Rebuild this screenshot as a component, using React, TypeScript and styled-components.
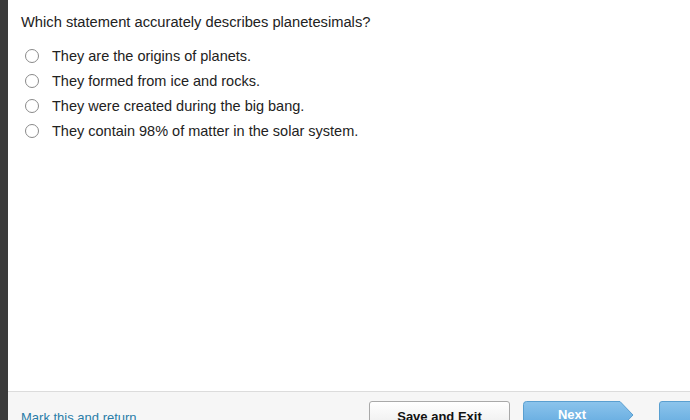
import React from "react";
import styled, { createGlobalStyle } from "styled-components";

const Global = createGlobalStyle`
  html, body { margin: 0; padding: 0; background: #fff; }
  body { font-family: "Liberation Sans", Arial, sans-serif; overflow: hidden; }
`;

const Page = styled.div`
  display: flex;
  width: 690px;
  height: 420px;
  overflow: hidden;
`;

const Strip = styled.div`
  width: 8px;
  flex: none;
  background: #3b3b3b;
`;

const Main = styled.div`
  flex: 1;
  display: flex;
  flex-direction: column;
  min-width: 0;
`;

const Content = styled.div`
  height: 391px;
  flex: none;
  padding: 13px 0 0 13px;
  box-sizing: border-box;
  background: #fff;
`;

const Question = styled.div`
  font-size: 14.7px;
  color: #222;
  line-height: 18px;
  margin-bottom: 12px;
`;

const Options = styled.div`
  display: flex;
  flex-direction: column;
`;

const Option = styled.label`
  display: flex;
  align-items: center;
  height: 25px;
  font-size: 14.5px;
  color: #222;
`;

const Radio = styled.span`
  width: 12px;
  height: 12px;
  border: 1.7px solid #8a8a8a;
  border-radius: 50%;
  margin: 0 13px 0 4px;
  flex: none;
`;

const Footer = styled.div`
  flex: 1;
  border-top: 1.5px solid #dcdcdc;
  background: #f6f6f6;
  display: flex;
  align-items: flex-start;
  padding: 9px 0 0 13px;
`;

const Link = styled.a`
  font-size: 13px;
  color: #2a7da8;
  margin-top: 9px;
  width: 348px;
  flex: none;
`;

const SaveButton = styled.button`
  width: 141px;
  height: 28px;
  flex: none;
  border: 1px solid #a9a9a9;
  border-radius: 3px;
  background: linear-gradient(#ffffff, #ececec);
  font-family: "Liberation Sans", Arial, sans-serif;
  font-weight: bold;
  font-size: 13px;
  color: #111;
  padding: 0;
  padding-top: 2px;
`;

const NextWrap = styled.div`
  position: relative;
  width: 111px;
  height: 28px;
  margin-left: 13px;
  flex: none;
`;

const NextSvg = styled.svg`
  position: absolute;
  inset: 0;
`;

const NextLabel = styled.span`
  position: relative;
  display: block;
  width: 98px;
  text-align: center;
  line-height: 28px;
  font-weight: bold;
  font-size: 13px;
  color: #fff;
`;

const Third = styled.div`
  width: 40px;
  height: 28px;
  margin-left: 25px;
  flex: none;
  border: 1px solid #5a9fd0;
  border-radius: 3px;
  background: linear-gradient(#8cc4ec, #5fa8de);
`;

const options = [
  "They are the origins of planets.",
  "They formed from ice and rocks.",
  "They were created during the big bang.",
  "They contain 98% of matter in the solar system.",
];

export default function App() {
  return (
    <Page>
      <Global />
      <Strip />
      <Main>
        <Content>
          <Question>Which statement accurately describes planetesimals?</Question>
          <Options>
            {options.map((o) => (
              <Option key={o}>
                <Radio />
                {o}
              </Option>
            ))}
          </Options>
        </Content>
        <Footer>
          <Link>Mark this and return</Link>
          <SaveButton>Save and Exit</SaveButton>
          <NextWrap>
            <NextSvg width="111" height="28" viewBox="0 0 111 28">
              <defs>
                <linearGradient id="ng" x1="0" y1="0" x2="0" y2="1">
                  <stop offset="0" stopColor="#8cc4ec" />
                  <stop offset="1" stopColor="#5fa8de" />
                </linearGradient>
              </defs>
              <path
                d="M3.5 0.5 H97 L110 14 L97 27.5 H3.5 Q0.5 27.5 0.5 24.5 V3.5 Q0.5 0.5 3.5 0.5 Z"
                fill="url(#ng)"
                stroke="#5a9fd0"
              />
            </NextSvg>
            <NextLabel>Next</NextLabel>
          </NextWrap>
          <Third />
        </Footer>
      </Main>
    </Page>
  );
}
